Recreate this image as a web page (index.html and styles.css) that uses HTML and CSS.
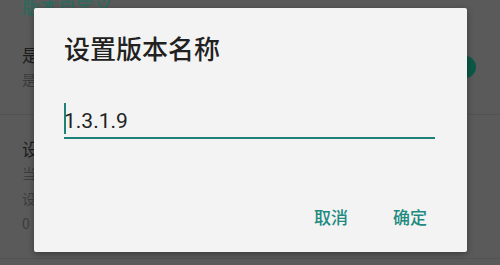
FILE: index.html
```html
<!DOCTYPE html>
<html lang="zh-CN">
<head>
<meta charset="utf-8">
<title>设置版本名称</title>
<link rel="stylesheet" href="styles.css">
</head>
<body>
<div class="screen">
  <div class="settings">
    <div class="header">版本自定义</div>
    <div class="row">
      <div class="row-text">
        <div class="row-title">是否启用自定义版本</div>
        <div class="row-sub">是否使用自定义的版本名称</div>
      </div>
      <div class="switch"><span class="knob"></span></div>
    </div>
    <div class="divider"></div>
    <div class="row">
      <div class="row-text">
        <div class="row-title">设置版本名称</div>
        <div class="row-sub">当前版本名称：1.3.1.9</div>
        <div class="row-sub">设置后将替换显示的版本名称</div>
        <div class="row-sub">0</div>
      </div>
    </div>
    <div class="divider"></div>
  </div>

  <div class="dialog">
    <div class="dialog-title">设置版本名称</div>
    <div class="field">
      <span class="cursor"></span>
      <span class="field-value">1.3.1.9</span>
    </div>
    <div class="actions">
      <button class="btn">取消</button>
      <button class="btn">确定</button>
    </div>
  </div>
</div>
</body>
</html>
```
FILE: styles.css
```css
* { box-sizing: border-box; }
html, body { margin: 0; padding: 0; }
body {
  width: 500px;
  height: 265px;
  overflow: hidden;
  background: #5a5a5a;
  font-family: "Noto Sans CJK SC", "Noto Sans", sans-serif;
}
.screen {
  position: relative;
  width: 500px;
  height: 265px;
  overflow: hidden;
}
.settings {
  display: flex;
  flex-direction: column;
}
.header {
  margin-top: -6px;
  margin-bottom: 3px;
  padding-left: 22px;
  font-size: 18px;
  line-height: 24px;
  color: #2d6a5d;
  font-weight: 500;
}
.row {
  display: flex;
  align-items: center;
  padding: 21px 24px 22px 22px;
}
.row-text {
  flex: 1;
  display: flex;
  flex-direction: column;
}
.row-title {
  font-size: 17px;
  line-height: 25px;
  color: #1c1c1c;
  white-space: nowrap;
}
.row-sub {
  font-size: 14px;
  line-height: 25px;
  color: #3c3c3c;
  white-space: nowrap;
}
.switch {
  width: 36px;
  height: 22px;
  display: flex;
  justify-content: flex-end;
  align-items: center;
  border-radius: 11px;
  background: #3f5e57;
}
.knob {
  width: 22px;
  height: 22px;
  border-radius: 50%;
  background: #0c5846;
}
.divider {
  height: 1px;
  background: #525252;
}
.dialog {
  position: absolute;
  left: 34px;
  top: 8px;
  width: 433px;
  height: 244px;
  background: #f3f3f3;
  border-radius: 2px;
  box-shadow: 0 2px 6px rgba(0, 0, 0, 0.35);
  display: flex;
  flex-direction: column;
  padding: 24px 32px 18px 30px;
}
.dialog-title {
  font-size: 26px;
  line-height: 31px;
  color: #212121;
  font-weight: 500;
}
.field {
  position: relative;
  margin-top: 43px;
  height: 33px;
  border-bottom: 2px solid #1e8276;
  font-family: Roboto, "Noto Sans", sans-serif;
  font-size: 21px;
  line-height: 30px;
  color: #222222;
}
.cursor {
  position: absolute;
  left: 0;
  top: -3px;
  width: 2px;
  height: 31px;
  background: #1e8276;
}
.actions {
  margin-top: auto;
  display: flex;
  justify-content: flex-end;
  gap: 29px;
}
.btn {
  border: 0;
  background: transparent;
  padding: 0 8px;
  height: 36px;
  font-family: "Noto Sans CJK SC", "Noto Sans", sans-serif;
  font-size: 17px;
  font-weight: 500;
  color: #208a80;
}
```
